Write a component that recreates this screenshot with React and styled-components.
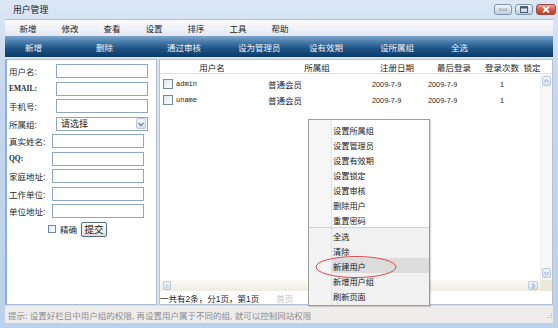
import React from 'react';
import styled, { createGlobalStyle } from 'styled-components';

const FONT = '"Liberation Sans", "Noto Sans CJK SC", sans-serif';

const GlobalStyle = createGlobalStyle`
  html, body { margin: 0; padding: 0; background: #fff; }
  body { font-family: ${FONT}; }
  * { box-sizing: border-box; }
`;

const Window = styled.div`
  position: relative;
  width: 558px;
  height: 328px;
  padding: 0 5px 5px;
  display: flex;
  flex-direction: column;
  overflow: hidden;
  background: linear-gradient(#dbe7f5, #c3d6ee 30%, #bcd1eb);
`;

const TitleBar = styled.div`
  height: 19px;
  margin-right: -3px;
  padding-left: 8px;
  display: flex;
  align-items: center;
  justify-content: space-between;
`;

const Title = styled.span`
  font-size: 8.8px;
  color: #15202e;
`;

const WinControls = styled.div`
  display: flex;
  gap: 3px;
  margin-top: -1px;
`;

const WinButton = styled.div`
  width: ${(p) => (p.$close ? '20px' : '18px')};
  height: 11px;
  border: 1px solid ${(p) => (p.$close ? '#9a4a3e' : '#8093ad')};
  border-radius: 3px;
  background: ${(p) =>
    p.$close
      ? 'linear-gradient(#f0a28f, #d5533c 55%, #c2402b)'
      : 'linear-gradient(#f3f6fa, #d6e0ec 55%, #c0cfe0)'};
  display: flex;
  align-items: center;
  justify-content: center;
`;

const MenuBar = styled.div`
  height: 17px;
  padding-left: 2px;
  display: flex;
  align-items: center;
  background: linear-gradient(#fbfbfe, #eef0f7 60%, #e2e6f1);
  border-top: 1px solid #aebfd6;
`;

const MenuItem = styled.span`
  width: 42px;
  text-align: center;
  font-size: 8.5px;
  color: #1e1e1e;
`;

const ToolBar = styled.div`
  height: 21px;
  padding-left: 20px;
  display: flex;
  align-items: center;
  background: linear-gradient(#7ea6cb 0%, #3d72a2 35%, #1c5283 62%, #0b3b69 100%);
`;

const ToolItem = styled.span`
  width: 71px;
  font-size: 8.5px;
  color: #eef4fa;
`;

const Body = styled.div`
  height: 248px;
  display: flex;
  gap: 2px;
  padding-top: 2px;
  background: #dce3ec;
`;

const LeftPanel = styled.div`
  width: 152px;
  padding: 4px 0 0 2px;
  display: flex;
  flex-direction: column;
  gap: 3.5px;
  background: #fff;
  border: 1px solid #a9bdd7;
  border-left: 2px solid #8fb0d9;
`;

const FormRow = styled.div`
  height: 14px;
  display: flex;
  align-items: center;
`;

const Label = styled.span`
  width: ${(p) => p.$w}px;
  font-family: ${(p) => (p.$latin ? '"Liberation Serif", serif' : FONT)};
  font-size: ${(p) => (p.$latin ? '7.5px' : '8.5px')};
  font-weight: ${(p) => (p.$latin ? 700 : 400)};
  color: #2b2b2b;
  white-space: nowrap;
`;

const TextInput = styled.div`
  width: 92px;
  height: 14px;
  border: 1px solid #8ea6c4;
  background: #fff;
`;

const Select = styled.div`
  width: 92px;
  height: 14px;
  border: 1px solid #8ea6c4;
  display: flex;
  align-items: center;
  justify-content: space-between;
  padding-left: 4px;
  font-size: 9px;
  color: #1b1b1b;
`;

const ArrowBox = styled.span`
  width: ${(p) => p.$w || 10}px;
  height: ${(p) => p.$h || 11}px;
  margin-right: ${(p) => p.$mr || 0}px;
  border: 1px solid #b9c8dc;
  border-radius: 2px;
  background: linear-gradient(#f3f7fc, #d5e1ef);
  display: flex;
  align-items: center;
  justify-content: center;
`;

const CheckRow = styled.div`
  height: 15px;
  padding-left: 39px;
  display: flex;
  align-items: center;
  font-size: 8.5px;
  color: #2b2b2b;
`;

const Check = styled.span`
  width: ${(p) => p.$size}px;
  height: ${(p) => p.$size}px;
  margin-right: ${(p) => p.$gap}px;
  flex: none;
  border: 1px solid #6f89ae;
  background: linear-gradient(135deg, #dfe6ef, #fff);
`;

const SubmitButton = styled.span`
  margin-left: 4px;
  width: 26px;
  height: 15px;
  border: 1px solid #566c8b;
  border-radius: 2px;
  background: linear-gradient(#ffffff, #ecebe6 70%, #d9d7cf);
  font-size: 9.5px;
  color: #111;
  display: flex;
  align-items: center;
  justify-content: center;
`;

const RightPanel = styled.div`
  flex: 1;
  display: flex;
  flex-direction: column;
  background: #fff;
  border: 1px solid #b4c2d3;
`;

const HeadRow = styled.div`
  height: 14px;
  display: flex;
  align-items: center;
  border-bottom: 1px solid #e4e4e4;
`;

const HeadCell = styled.span`
  width: ${(p) => p.$w}px;
  text-align: center;
  font-size: 8.5px;
  color: #1c1c1c;
`;

const ScrollArea = styled.div`
  flex: 1;
  display: flex;
`;

const Rows = styled.div`
  flex: 1;
  padding-top: 2px;
`;

const DataRow = styled.div`
  height: 16px;
  display: flex;
  align-items: center;
`;

const Cell = styled.span`
  width: ${(p) => p.$w}px;
  padding-left: ${(p) => p.$pl || 0}px;
  display: flex;
  align-items: center;
  justify-content: ${(p) => (p.$center ? 'center' : 'flex-start')};
  font-family: ${(p) => (p.$mono ? '"Liberation Mono", monospace' : FONT)};
  font-size: ${(p) => p.$fs || 8.5}px;
  color: #1c1c1c;
`;

const VScroll = styled.div`
  width: 12px;
  padding: 2px 1px;
  display: flex;
  flex-direction: column;
  justify-content: space-between;
  align-items: center;
  background: #f8f8f8;
  border-left: 1px solid #efefef;
`;

const HScroll = styled.div`
  height: 11px;
  display: flex;
  align-items: center;
`;

const HTrack = styled.div`
  flex: 1;
  height: 100%;
  padding: 0 2px 0 3px;
  display: flex;
  align-items: center;
  justify-content: space-between;
  background: linear-gradient(#fbfaf6, #efede2);
`;

const Corner = styled.div`
  width: 12px;
  height: 100%;
  background: #ebe9d8;
`;

const Pager = styled.div`
  height: 13px;
  display: flex;
  align-items: center;
  gap: 17px;
  font-size: 8.5px;
  color: #1c1c1c;
`;

const PagerLink = styled.span`
  color: #c2c2c2;
`;

const StatusBar = styled.div`
  height: 18px;
  padding: 1px 0 0 3px;
  display: flex;
  align-items: center;
  justify-content: space-between;
  font-size: 8.5px;
  color: #8c8c8c;
  background: #efecec;
  border-top: 1px solid #dcdcdc;
`;

const ContextMenu = styled.div`
  position: absolute;
  left: 308px;
  top: 119px;
  width: 122px;
  padding-top: 2px;
  border: 1px solid #9d9d9d;
  box-shadow: 1px 1px 1px rgba(0, 0, 0, 0.15);
  background: linear-gradient(to right, #f6f6f6 22px, #e2e2e2 22px 23px, #fff 23px);
`;

const MenuGroup = styled.div`
  padding-bottom: ${(p) => (p.$last ? 2 : 0)}px;
  background: ${(p) =>
    p.$shade ? 'linear-gradient(to right, #f3f3f3 22px, #e2e2e2 22px 23px, #f1f1f1 23px)' : 'transparent'};
  border-top: ${(p) => (p.$shade ? '1px solid #d2d2d2' : 'none')};
`;

const CtxItem = styled.div`
  height: 15px;
  padding-left: 24px;
  display: flex;
  align-items: center;
  font-size: 8.2px;
  color: #1a1a1a;
  background: ${(p) => (p.$active ? 'linear-gradient(to right, transparent 23px, #dcdcdc 23px)' : 'transparent')};
`;

const Highlight = styled.svg`
  position: absolute;
  left: 314px;
  top: 255px;
  overflow: visible;
`;

const Chevron = ({ dir = 'down', color = '#6d88ad' }) => {
  const d = {
    down: 'M1.5 3 L4 5.5 L6.5 3',
    up: 'M1.5 5 L4 2.5 L6.5 5',
    left: 'M5 1.5 L2.5 4 L5 6.5',
    right: 'M3 1.5 L5.5 4 L3 6.5',
  }[dir];
  return (
    <svg width="8" height="8" viewBox="0 0 8 8">
      <path d={d} fill="none" stroke={color} strokeWidth="1.3" />
    </svg>
  );
};

const menus = ['新增', '修改', '查看', '设置', '排序', '工具', '帮助'];
const tools = ['新增', '删除', '通过审核', '设为管理员', '设有效期', '设所属组', '全选'];

const fields = [
  { label: '用户名:', w: 47 },
  { label: 'EMAIL:', w: 47, latin: true },
  { label: '手机号:', w: 47 },
  { label: '所属组:', w: 47, select: true },
  { label: '真实姓名:', w: 43 },
  { label: 'QQ:', w: 43, latin: true },
  { label: '家庭地址:', w: 43 },
  { label: '工作单位:', w: 43 },
  { label: '单位地址:', w: 43 },
];

const columns = [
  { title: '用户名', w: 104 },
  { title: '所属组', w: 106 },
  { title: '注册日期', w: 54 },
  { title: '最后登录', w: 60 },
  { title: '登录次数', w: 36 },
  { title: '锁定', w: 24 },
];

const users = [
  { name: 'admin', group: '普通会员', reg: '2009-7-9', last: '2009-7-9', count: 1 },
  { name: 'uname', group: '普通会员', reg: '2009-7-9', last: '2009-7-9', count: 1 },
];

const ctxTop = ['设置所属组', '设置管理员', '设置有效期', '设置锁定', '设置审核', '删除用户', '重置密码'];
const ctxBottom = ['全选', '清除', '新建用户', '新增用户组', '刷新页面'];

export default function App() {
  return (
    <>
      <GlobalStyle />
      <Window>
        <TitleBar>
          <Title>用户管理</Title>
          <WinControls>
            <WinButton>
              <svg width="8" height="3"><rect x="0" y="0" width="8" height="2" fill="#fff" stroke="#4a5d78" strokeWidth="0.6" /></svg>
            </WinButton>
            <WinButton>
              <svg width="8" height="7"><rect x="0.5" y="0.5" width="7" height="6" fill="none" stroke="#4a5d78" strokeWidth="1" /><rect x="0.5" y="0.5" width="7" height="2" fill="#4a5d78" /></svg>
            </WinButton>
            <WinButton $close>
              <svg width="8" height="7"><path d="M1 0.5 L7 6.5 M7 0.5 L1 6.5" stroke="#fff" strokeWidth="1.8" /></svg>
            </WinButton>
          </WinControls>
        </TitleBar>

        <MenuBar>
          {menus.map((m) => (
            <MenuItem key={m}>{m}</MenuItem>
          ))}
        </MenuBar>

        <ToolBar>
          {tools.map((t) => (
            <ToolItem key={t}>{t}</ToolItem>
          ))}
        </ToolBar>

        <Body>
          <LeftPanel>
            {fields.map((f) => (
              <FormRow key={f.label}>
                <Label $w={f.w} $latin={f.latin}>{f.label}</Label>
                {f.select ? (
                  <Select>
                    请选择
                    <ArrowBox $mr={1}>
                      <Chevron />
                    </ArrowBox>
                  </Select>
                ) : (
                  <TextInput />
                )}
              </FormRow>
            ))}
            <CheckRow>
              <Check $size={8} $gap={4} />
              精确
              <SubmitButton>提交</SubmitButton>
            </CheckRow>
          </LeftPanel>

          <RightPanel>
            <HeadRow>
              {columns.map((c) => (
                <HeadCell key={c.title} $w={c.w}>{c.title}</HeadCell>
              ))}
            </HeadRow>
            <ScrollArea>
              <Rows>
                {users.map((u) => (
                  <DataRow key={u.name}>
                    <Cell $w={104} $pl={3} $mono $fs={7}>
                      <Check $size={10} $gap={3} />
                      {u.name}
                    </Cell>
                    <Cell $w={106} $pl={4}>{u.group}</Cell>
                    <Cell $w={54} $pl={2} $fs={7.3}>{u.reg}</Cell>
                    <Cell $w={60} $pl={4} $fs={7.3}>{u.last}</Cell>
                    <Cell $w={36} $center $fs={7.3}>{u.count}</Cell>
                  </DataRow>
                ))}
              </Rows>
              <VScroll>
                <ArrowBox $w={9} $h={10}>
                  <Chevron dir="up" color="#a9b6c6" />
                </ArrowBox>
                <ArrowBox $w={9} $h={10}>
                  <Chevron dir="down" color="#a9b6c6" />
                </ArrowBox>
              </VScroll>
            </ScrollArea>
            <HScroll>
              <HTrack>
                <ArrowBox $w={8} $h={9}>
                  <Chevron dir="left" color="#a9b6c6" />
                </ArrowBox>
                <ArrowBox $w={10} $h={9}>
                  <Chevron dir="right" color="#a9b6c6" />
                </ArrowBox>
              </HTrack>
              <Corner />
            </HScroll>
            <Pager>
              <span>一共有2条，分1页，第1页</span>
              <PagerLink>首页</PagerLink>
            </Pager>
          </RightPanel>
        </Body>

        <StatusBar>
          <span>提示: 设置好栏目中用户组的权限, 再设置用户属于不同的组, 就可以控制网站权限</span>
          <svg width="8" height="8" viewBox="0 0 8 8">
            <rect x="6" y="2" width="1" height="1" fill="#b5b5b5" />
            <rect x="4" y="4" width="1" height="1" fill="#b5b5b5" />
            <rect x="6" y="4" width="1" height="1" fill="#b5b5b5" />
            <rect x="2" y="6" width="1" height="1" fill="#b5b5b5" />
            <rect x="4" y="6" width="1" height="1" fill="#b5b5b5" />
            <rect x="6" y="6" width="1" height="1" fill="#b5b5b5" />
          </svg>
        </StatusBar>

        <ContextMenu>
          <MenuGroup>
            {ctxTop.map((t) => (
              <CtxItem key={t}>{t}</CtxItem>
            ))}
          </MenuGroup>
          <MenuGroup $shade $last>
            {ctxBottom.map((t) => (
              <CtxItem key={t} $active={t === '新建用户'}>{t}</CtxItem>
            ))}
          </MenuGroup>
        </ContextMenu>

        <Highlight width="84" height="24" viewBox="0 0 84 24">
          <ellipse cx="42" cy="12" rx="40" ry="10.5" fill="none" stroke="#e0474c" strokeWidth="1" />
        </Highlight>
      </Window>
    </>
  );
}
